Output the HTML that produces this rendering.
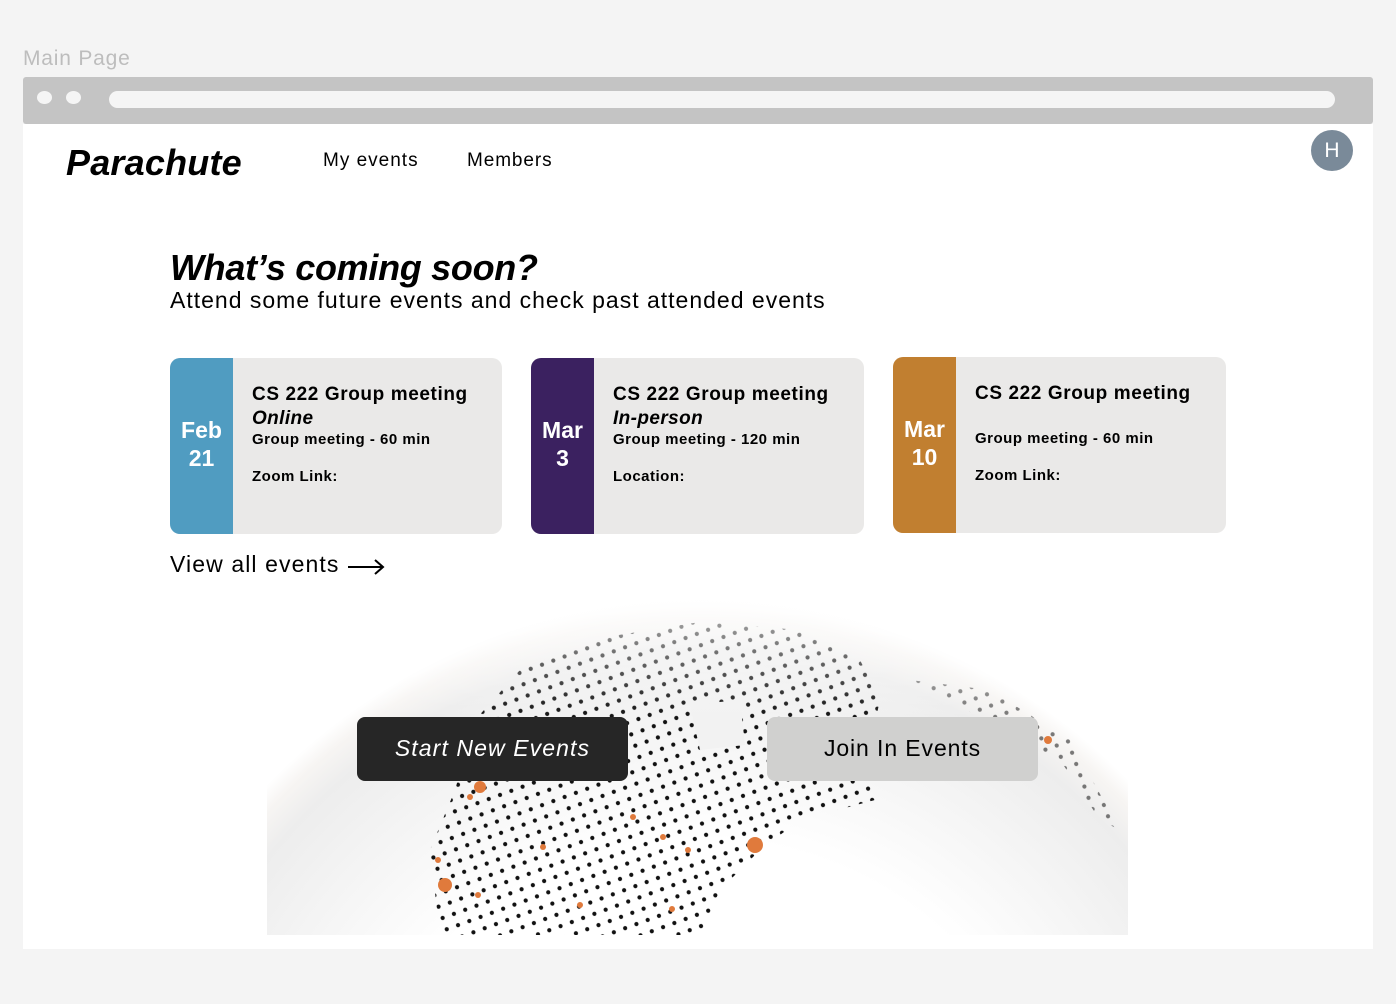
<!DOCTYPE html>
<html><head><meta charset="utf-8"><style>
*{margin:0;padding:0;box-sizing:border-box}
html,body{width:1396px;height:1004px;overflow:hidden}
body{background:#f4f4f4;font-family:"Liberation Sans",sans-serif;position:relative}
.a{position:absolute}
.card{position:absolute;top:358px;width:333px;height:176px;background:#eae9e8;border-radius:10px;overflow:hidden}
.strip{position:absolute;left:0;top:0;width:63px;height:100%;color:#fff;font-weight:bold;font-size:23px;line-height:28px;text-align:center;padding-top:58px}
.t{position:absolute;left:82px;color:#000}
.h{top:26px;font-weight:bold;font-size:19px;letter-spacing:0.6px}
.i{top:50px;font-weight:bold;font-style:italic;font-size:19px;letter-spacing:0.4px}
.s{font-size:15px;font-weight:bold;letter-spacing:0.5px}
</style></head><body>
<div class="a" style="left:23px;top:47px;font-size:21px;color:#bdbdbd;letter-spacing:0.8px">Main Page</div>
<div class="a" style="left:23px;top:77px;width:1350px;height:47px;background:#c4c4c4;border-radius:3px"></div>
<div class="a" style="left:37px;top:91px;width:15px;height:13px;border-radius:50%;background:#f5f5f5"></div>
<div class="a" style="left:66px;top:91px;width:15px;height:13px;border-radius:50%;background:#f5f5f5"></div>
<div class="a" style="left:109px;top:91px;width:1226px;height:17px;border-radius:9px;background:#f5f5f5"></div>
<div class="a" style="left:23px;top:124px;width:1350px;height:825px;background:#fff"></div>
<div class="a" style="left:66px;top:142px;font-size:36px;font-weight:bold;font-style:italic;letter-spacing:0.2px">Parachute</div>
<div class="a" style="left:323px;top:150px;font-size:19px;letter-spacing:1px">My events</div>
<div class="a" style="left:467px;top:150px;font-size:19px;letter-spacing:0.9px">Members</div>
<div class="a" style="left:1311px;top:130px;width:42px;height:41px;border-radius:50%;background:#7a8a99;color:#fff;font-size:21px;text-align:center;line-height:41px">H</div>
<div class="a" style="left:170px;top:247px;font-size:36px;font-weight:bold;font-style:italic;letter-spacing:-0.3px">What’s coming soon?</div>
<div class="a" style="left:170px;top:287px;font-size:23px;letter-spacing:1px">Attend some future events and check past attended events</div>

<div class="card" style="left:170px;width:332px"><div class="strip" style="background:#509cc1">Feb<br>21</div>
<div class="t h">CS 222 Group meeting</div><div class="t i">Online</div><div class="t s" style="top:73px">Group meeting - 60 min</div><div class="t s" style="top:110px">Zoom Link:</div></div>
<div class="card" style="left:531px"><div class="strip" style="background:#3b2160">Mar<br>3</div>
<div class="t h">CS 222 Group meeting</div><div class="t i">In-person</div><div class="t s" style="top:73px">Group meeting - 120 min</div><div class="t s" style="top:110px">Location:</div></div>
<div class="card" style="left:893px;top:357px"><div class="strip" style="background:#c17f30">Mar<br>10</div>
<div class="t h">CS 222 Group meeting</div><div class="t s" style="top:73px">Group meeting - 60 min</div><div class="t s" style="top:110px">Zoom Link:</div></div>

<div class="a" style="left:170px;top:551px;font-size:23px;letter-spacing:1.1px">View all events</div>
<svg class="a" style="left:347px;top:557px" width="40" height="20"><path d="M1 10H36M28 3L36 10L28 17" stroke="#000" stroke-width="2" fill="none"/></svg>

<svg class="a" style="left:267px;top:575px" width="861" height="360" viewBox="267 575 861 360">
<defs>
<radialGradient id="g" cx="700" cy="1200" r="600" gradientUnits="userSpaceOnUse">
<stop offset="0.6" stop-color="#fff"/><stop offset="0.92" stop-color="#ededed"/><stop offset="0.97" stop-color="#f7f5f3"/><stop offset="1" stop-color="#fff"/></radialGradient>
<pattern id="p" width="12" height="12" patternUnits="userSpaceOnUse" patternTransform="rotate(-20)"><circle cx="6" cy="6" r="2.1" fill="#111"/></pattern>
<linearGradient id="f" x1="0" y1="0" x2="0" y2="1"><stop offset="0.1" stop-color="#fff" stop-opacity="0.65"/><stop offset="0.4" stop-color="#fff" stop-opacity="0"/></linearGradient>
</defs>
<rect x="267" y="575" width="861" height="360" fill="#fff"/>
<circle cx="700" cy="1200" r="600" fill="url(#g)"/>
<path d="M440 935L430 850L455 790L475 720L520 670L600 638L700 622L800 630L860 660L880 700L870 745L875 800L800 820L760 850L720 890L700 935Z" fill="url(#p)"/>
<path d="M690 705L740 700L745 745L700 750Z" fill="#f2f2f2"/>
<path d="M910 680L990 690L1070 740L1120 830L1100 820L1060 760Z" fill="url(#p)" opacity="0.55"/>
<rect x="267" y="575" width="861" height="360" fill="url(#f)"/>
<g fill="#e07a3c"><circle cx="480" cy="787" r="6"/><circle cx="445" cy="885" r="7"/><circle cx="755" cy="845" r="8"/><circle cx="633" cy="817" r="3"/><circle cx="663" cy="837" r="3"/><circle cx="688" cy="850" r="3"/><circle cx="543" cy="847" r="3"/><circle cx="478" cy="895" r="3"/><circle cx="580" cy="905" r="3"/><circle cx="672" cy="909" r="3"/><circle cx="438" cy="860" r="3"/><circle cx="470" cy="797" r="3"/><circle cx="1048" cy="740" r="4"/></g>
</svg>
<div class="a" style="left:357px;top:717px;width:271px;height:64px;background:#262626;border-radius:8px;color:#fff;font-size:23px;font-style:italic;text-align:center;line-height:62px;letter-spacing:1.1px">Start New Events</div>
<div class="a" style="left:767px;top:717px;width:271px;height:64px;background:#d0d0cf;border-radius:8px;color:#000;font-size:23px;text-align:center;line-height:62px;letter-spacing:0.9px">Join In Events</div>
</body></html>
